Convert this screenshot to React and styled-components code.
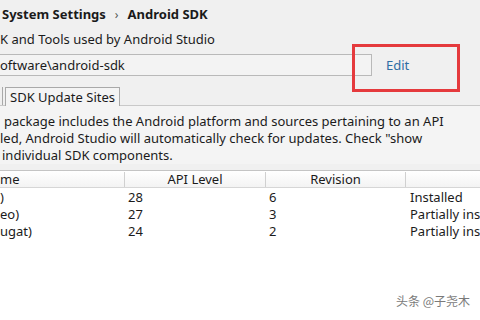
import React from "react";
import styled, { createGlobalStyle } from "styled-components";

const Global = createGlobalStyle`
  html, body { margin: 0; padding: 0; background: #f0f0f0; }
  body { font-family: "Noto Sans", "Noto Sans CJK SC", sans-serif; color: #1b1b1b; }
`;

const Page = styled.div`
  position: relative;
  width: 480px;
  height: 320px;
  overflow: hidden;
  display: flex;
  flex-direction: column;
  background: #f0f0f0;
  font-size: 13px;
`;

const Breadcrumb = styled.div`
  height: 28px;
  display: flex;
  align-items: center;
  gap: 9px;
  padding-left: 2px;
  font-weight: 700;
  font-size: 13px;
  color: #1a1a1a;
`;

const Sep = styled.span`
  font-weight: 400;
  color: #555;
  font-size: 12px;
`;

const Subtitle = styled.div`
  height: 22px;
  line-height: 22px;
  white-space: nowrap;
`;

const PathRow = styled.div`
  margin-top: 4px;
  display: flex;
  align-items: center;
  height: 22px;
`;

const Field = styled.div`
  width: 371px;
  height: 20px;
  border: 1px solid #b9b9b9;
  border-left: none;
  background: #f3f3f3;
  line-height: 20px;
  white-space: nowrap;
`;

const EditLink = styled.span`
  margin-left: 14px;
  color: #2e6da4;
`;

const Highlight = styled.div`
  position: absolute;
  left: 352px;
  top: 44px;
  width: 102px;
  height: 42px;
  border: 3px solid #e53a3d;
`;

const TabBar = styled.div`
  margin-top: 11px;
  height: 18px;
  display: flex;
  border-bottom: 1px solid #c9c9c9;
`;

const PrevTabEdge = styled.div`
  width: 2px;
  border-right: 1px solid #a9a9a9;
`;

const Tab = styled.div`
  margin-left: 2px;
  padding: 0 4px;
  height: 18px;
  line-height: 18px;
  border: 1px solid #a9a9a9;
  border-bottom: none;
  background: #f4f4f4;
  white-space: nowrap;
`;

const Description = styled.div`
  padding-top: 7px;
  line-height: 17px;
  background: #f4f4f4;
`;

const DescLine = styled.div`
  white-space: nowrap;
  padding-left: ${(p) => p.$indent || 0}px;
`;

const Table = styled.div`
  margin-top: 6px;
  flex: 1;
  background: #ffffff;
  border-top: 1px solid #c4c4c4;
  display: flex;
  flex-direction: column;
`;

const Row = styled.div`
  display: grid;
  grid-template-columns: 124px 141px 140px 1fr;
  height: 17px;
  line-height: 17px;
  white-space: nowrap;
`;

const HeaderRow = styled(Row)`
  height: 16px;
  line-height: 16px;
  background: linear-gradient(#ffffff, #f3f3f3);
  border-bottom: 1px solid #d6d6d6;
  margin-bottom: 1px;
  align-items: end;
`;

const HeadCell = styled.div`
  height: 14px;
  line-height: 14px;
  padding-bottom: 1px;
  text-align: ${(p) => (p.$center ? "center" : "left")};
  border-left: ${(p) => (p.$first ? "none" : "1px solid #d0d0d0")};
  white-space: nowrap;
`;

const Cell = styled.div`
  padding-left: ${(p) => p.$pad}px;
  overflow: hidden;
`;

const Watermark = styled.div`
  position: absolute;
  left: 396px;
  top: 292px;
  font-family: "Noto Sans CJK SC", sans-serif;
  font-size: 12px;
  color: #7a7a7a;
  text-shadow: 0 0 2px #ffffff;
`;

const rows = [
  { name: ")", api: "28", rev: "6", status: "Installed" },
  { name: "eo)", api: "27", rev: "3", status: "Partially installed" },
  { name: "ugat)", api: "24", rev: "2", status: "Partially installed" },
];

export default function App() {
  return (
    <Page>
      <Global />
      <Breadcrumb>
        <span>System Settings</span>
        <Sep>›</Sep>
        <span>Android SDK</span>
      </Breadcrumb>
      <Subtitle>K and Tools used by Android Studio</Subtitle>
      <PathRow>
        <Field>oftware\android-sdk</Field>
        <EditLink>Edit</EditLink>
      </PathRow>
      <TabBar>
        <PrevTabEdge />
        <Tab>SDK Update Sites</Tab>
      </TabBar>
      <Description>
        <DescLine $indent={4}>
          package includes the Android platform and sources pertaining to an API
        </DescLine>
        <DescLine>
          led, Android Studio will automatically check for updates. Check "show
        </DescLine>
        <DescLine $indent={2}> individual SDK components.</DescLine>
      </Description>
      <Table>
        <HeaderRow>
          <HeadCell $first>me</HeadCell>
          <HeadCell $center>API Level</HeadCell>
          <HeadCell $center>Revision</HeadCell>
          <HeadCell />
        </HeaderRow>
        {rows.map((r) => (
          <Row key={r.api}>
            <Cell $pad={0}>{r.name}</Cell>
            <Cell $pad={4}>{r.api}</Cell>
            <Cell $pad={4}>{r.rev}</Cell>
            <Cell $pad={5}>{r.status}</Cell>
          </Row>
        ))}
      </Table>
      <Highlight />
      <Watermark>头条 @子尧木</Watermark>
    </Page>
  );
}
